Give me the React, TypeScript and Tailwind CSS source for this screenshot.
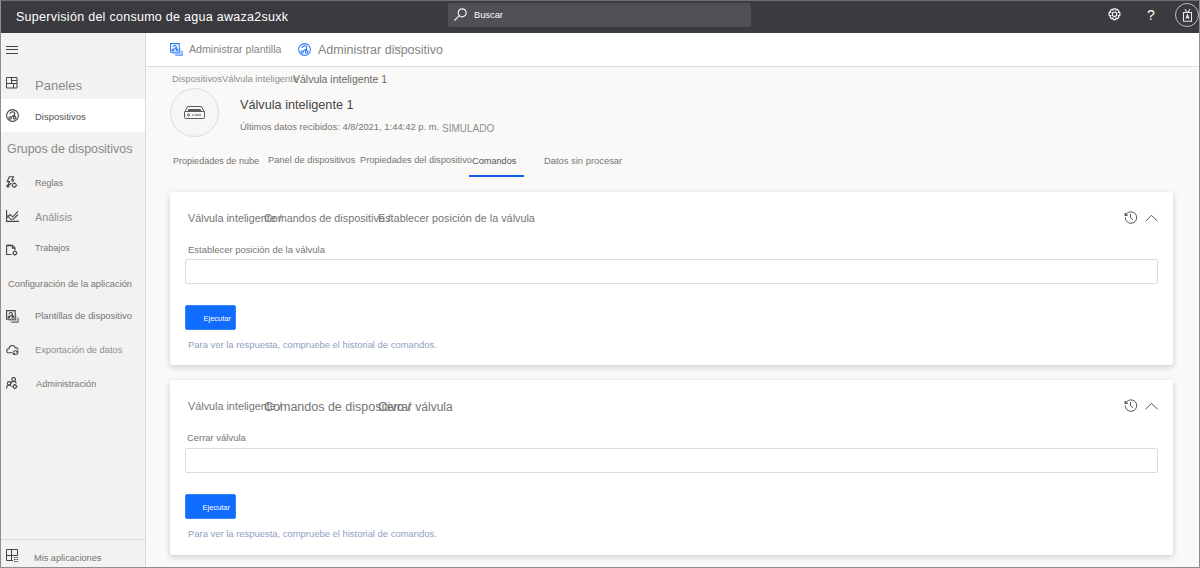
import type { ReactNode } from "react";

const stroke = { fill: "none", stroke: "currentColor", strokeWidth: 1.1 };

function MenuIcon() {
  return (
    <svg width="12" height="9" viewBox="0 0 12 9" {...stroke} strokeWidth={1}>
      <path d="M0 1.500h12M0 4.500h12M0 8.500h12" />
    </svg>
  );
}

function DashboardIcon() {
  return (
    <svg width="12" height="12" viewBox="0 0 12 12" {...stroke} strokeWidth={1}>
      <path d="M.5 .5h10.500v10.500H.5zM5.500 .5v6M7.500 6.500v4.500M.5 6.500h10.500M5.500 3.500h5.500" />
    </svg>
  );
}

function DeviceIcon({ size = 13 }: { size?: number }) {
  return (
    <svg width={size} height={size} viewBox="0 0 13 13" {...stroke}>
      <circle cx="6.500" cy="6.500" r="5.900" />
      <circle cx="4.100" cy="8.900" r="1.200" />
      <circle cx="8.600" cy="8.700" r="1.300" />
      <path d="M3.900 5c.3-1.600 1.800-2.500 3.300-2.100s2.200 2.200 .9 3.100L5 8.100M8.300 5.700l.3 1.700" />
    </svg>
  );
}

function RulesIcon() {
  return (
    <svg width="12" height="13" viewBox="0 0 12 13" {...stroke}>
      <path d="M3.300 .7h4.200L5.700 4h2L6.300 6M3.300 .7L1.200 5.600h2.300L1.300 10.800 5.300 7M1 11V8.700M1 11h2.400" />
      <circle cx="8.300" cy="9.200" r="1.900" />
      <path d="M8.300 6.300v1M8.300 11.100v1M5.600 9.200h.8M10.200 9.200h1" />
    </svg>
  );
}

function AnalyticsIcon() {
  return (
    <svg width="13" height="13" viewBox="0 0 13 13" {...stroke}>
      <path d="M.6 0v11.400H13M1 7.500l3-3 2.800 2.300L12 1.300M1.500 5.500l3.500 4 2.500-.5L12 4.500" />
    </svg>
  );
}

function JobsIcon() {
  return (
    <svg width="12" height="12" viewBox="0 0 12 12" {...stroke}>
      <path d="M5.500 10.500H.6V1.400h5.900L9 3.900v2.300M6.300 1.400v2.700H9M2.200 .5v2M4.200 .5v2" />
      <circle cx="8.900" cy="9" r="1.700" />
      <path d="M8.900 6.500v.8M8.900 10.700v.8M6.500 9h.7M10.600 9h.8" />
    </svg>
  );
}

function TemplateIcon({ tint = "#b9b8b7" }: { tint?: string }) {
  return (
    <svg width="13" height="13" viewBox="0 0 13 13" {...stroke}>
      <path d="M9.800 5v5.500H2.500M11.800 7.500v4.300H5" stroke={tint} strokeWidth={1.700} />
      <path d="M.6 .6h8.600v8.600H.6z" />
      <path d="M12.300 8v4.300H5.500" strokeWidth={0.6} />
      <path d="M3 4.200C3.200 2.500 6 1.700 6.300 3.600S4 5.700 3.200 6.800M6.500 4.500l.3 2" />
      <circle cx="2.900" cy="7.200" r=".8" />
      <circle cx="6.800" cy="7" r=".8" />
    </svg>
  );
}

function ExportIcon() {
  return (
    <svg width="13" height="12" viewBox="0 0 13 12" {...stroke}>
      <path d="M6.500 8.800H3C-.3 8.600 .2 4.600 3 4.700 3.300 .8 8.300 .6 9.200 3.600c1.700-.1 2.900 .8 2.900 2.200" />
      <path d="M7.300 8.200c.6-1.800 3.300-2 4.200-.3M11.900 6.500v1.700h-1.700M12 9.100c-.6 1.800-3.300 2-4.200 .3M7.400 10.900V9.200h1.700" />
    </svg>
  );
}

function AdminIcon() {
  return (
    <svg width="12" height="13" viewBox="0 0 12 13" {...stroke}>
      <circle cx="7.600" cy="2.500" r="1.900" />
      <circle cx="3.100" cy="6.300" r="1.700" />
      <path d="M5.200 6.300c.2-1.200 1-1.900 2.400-1.900s2.400 .7 2.700 1.900M.6 11.500c0-2.200 1-3.500 2.500-3.500s2 .8 2.300 1.700" />
      <circle cx="8.800" cy="9.600" r="1.700" />
      <path d="M8.800 7v.9M8.800 11.300v.9M6.300 9.600h.8M10.500 9.600h.9" />
    </svg>
  );
}

function AppsIcon() {
  return (
    <svg width="13" height="13" viewBox="0 0 13 13" {...stroke} strokeWidth={1}>
      <path d="M7 11.500H.5V.5h11v6M5.500 .5v11M.5 6.500h11" />
      <path d="M8 8.500h1.500M10.500 8.500H12M8 10.500h1.500M10.500 10.500H12M8 12.500h1.500M10.500 12.500H12" />
    </svg>
  );
}

function GearIcon() {
  return (
    <svg width="13" height="13" viewBox="0 0 13 13" {...stroke}>
      <path d="M5.300 .7h2.400l.3 1.500 1.300-.8 1.700 1.700-.8 1.300 1.700 .4v2.600l-1.700 .4 .8 1.300-1.700 1.700-1.300-.8-.3 1.600H5.300L5 10l-1.300 .8L2 9.100l.8-1.300-1.700-.4V4.800l1.700-.4L2 3.100l1.700-1.700 1.300 .8z" />
      <circle cx="6.500" cy="6.200" r="2.200" />
    </svg>
  );
}

function BadgeIcon() {
  return (
    <svg width="11" height="13" viewBox="0 0 11 13" {...stroke}>
      <path d="M1.500 3.500h8v8.800h-8zM3 .3l2 3M8 .3l-2 3M4 9.800l1.500-4 1.500 4M4.500 8.500h2" />
    </svg>
  );
}

function GatewayIcon() {
  return (
    <svg width="23" height="14" viewBox="0 0 23 14" fill="none" stroke="#5b5a59" strokeWidth="1">
      <path d="M1.500 6.500L4.500 .5h14l3 6M2.500 5.500h18a1 1 0 0 1 1 1v5a1 1 0 0 1-1 1h-18a1 1 0 0 1-1-1v-5a1 1 0 0 1 1-1z" />
      <path d="M5.500 3h12l1 2.500h-14z" fill="#5b5a59" stroke="none" />
      <circle cx="5.500" cy="9" r="1" />
      <path d="M9 9h1.500M11.500 9H18" />
    </svg>
  );
}

function HistoryIcon() {
  return (
    <svg width="14" height="13" viewBox="0 0 14 13" fill="none" stroke="#555453" strokeWidth="1">
      <path d="M2 3.600C4.500-.8 12.700 .3 12.700 6.500c0 3.300-2.600 5.800-5.700 5.800S1.300 9.800 1.300 6.500M6.500 3v3.700L9 8.800" />
      <path d="M1.300 2v2.300h2.300" strokeWidth="1.400" />
    </svg>
  );
}

function Row({ icon, children, className }: { icon: ReactNode; children: string; className: string }) {
  return (
    <div className="flex w-full items-center pl-[5px]">
      <span className="flex w-[29px] shrink-0 text-[#454443]">{icon}</span>
      <span className={className}>{children}</span>
    </div>
  );
}

function Card({
  heading,
  label,
  className,
  labelClass,
  buttonClass,
}: {
  heading: ReactNode;
  label: string;
  className: string;
  labelClass: string;
  buttonClass: string;
}) {
  return (
    <section
      className={`${className} flex w-[1003px] shrink-0 flex-col rounded-[3px] bg-white px-[15px] shadow-[0_2px_6px_rgba(0,0,0,0.18)]`}
    >
      <div className="flex h-[51px] shrink-0 items-center pl-[3px] text-[10.820px] text-[#767574]">
        <div className="flex items-center pt-0.5">{heading}</div>
        <div className="ml-auto flex items-center gap-[7px]">
          <HistoryIcon />
          <svg width="13" height="8" viewBox="0 0 13 8" fill="none" stroke="#555453" strokeWidth="1">
            <path d="M.5 7.300l6-6 6 6" />
          </svg>
        </div>
      </div>
      <div className={`flex shrink-0 items-start pt-px pl-[3px] text-[9.450px] leading-3 text-[#767574] ${labelClass}`}>{label}</div>
      <input className="h-[25px] w-[973px] shrink-0 rounded-[2px] border border-[#dddcdb] bg-white" />
      <button
        className={`mt-[21px] flex h-[25px] w-[51px] shrink-0 items-center justify-end rounded-[2px] border border-[#3583ff] bg-[#0f6cff] pt-0.5 text-[7.500px] text-white ${buttonClass}`}
      >
        Ejecutar
      </button>
      <p className="mt-2 pl-[3px] text-[9.430px] leading-[14px] text-[#8fa0c2]">
        Para ver la respuesta, compruebe el historial de comandos.
      </p>
    </section>
  );
}

export default function App() {
  return (
    <div className="flex h-[568px] w-[1200px] flex-col overflow-hidden border border-[#8e8e8e] border-t-[#6f6f6f] bg-[#faf9f8] font-['Liberation_Sans',Arial,sans-serif] whitespace-nowrap">
      <header className="flex h-8 shrink-0 items-center bg-[#3b3a3f] text-white">
        <h1 className="w-[447px] pl-[15px] text-[12.500px] tracking-[0.28px]">Supervisión del consumo de agua awaza2suxk</h1>
        <div className="mb-1 flex h-6 w-[303px] items-center rounded-[2px] bg-[#504f54] pl-[6px]">
          <svg className="mb-0.5" width="13" height="13" viewBox="0 0 13 13" fill="none" stroke="#f0f0f5" strokeWidth="1.200">
            <circle cx="8.200" cy="4.800" r="4" />
            <path d="M5.300 7.700L.5 12.500" />
          </svg>
          <span className="pt-px pl-[7px] text-[9.300px]">Buscar</span>
        </div>
        <div className="mb-1 ml-auto flex items-center">
          <span className="pb-px"><GearIcon /></span>
          <span className="w-[54px] pb-px pl-[26px] text-[14px] leading-none">?</span>
          <span className="flex size-6 items-center justify-center rounded-full border border-[#bdbdc0] text-[#e8e8e8]">
            <BadgeIcon />
          </span>
        </div>
      </header>

      <div className="flex min-h-0 flex-1">
        <nav className="flex w-[145px] shrink-0 flex-col border-r border-[#dddcdb] bg-[#f3f2f1] text-[#767574]">
          <div className="flex h-[33px] items-center pl-[5px] text-[#454443]">
            <MenuIcon />
          </div>
          <div className="flex h-[33px]">
            <Row icon={<DashboardIcon />} className="pt-[7px] text-[13px] text-[#8a8988]">Paneles</Row>
          </div>
          <div className="flex h-[33px] bg-white">
            <Row icon={<DeviceIcon />} className="pt-[3px] text-[9.500px] text-[#555453]">Dispositivos</Row>
          </div>
          <div className="flex h-[33px] items-center pt-0.5 pl-[6px] text-[12.400px] text-[#8a8988]">Grupos de dispositivos</div>
          <div className="flex h-[34px]">
            <Row icon={<RulesIcon />} className="pt-[3px] text-[9px]">Reglas</Row>
          </div>
          <div className="flex h-[34px]">
            <Row icon={<AnalyticsIcon />} className="pt-0.5 text-[10.800px] text-[#8f8e8d]">Análisis</Row>
          </div>
          <div className="flex h-[33px]">
            <Row icon={<JobsIcon />} className="pb-0.5 text-[9px]">Trabajos</Row>
          </div>
          <div className="flex h-[33px] items-center pt-[4px] pl-[7px] text-[9.300px]">Configuración de la aplicación</div>
          <div className="flex h-[34px]">
            <Row icon={<TemplateIcon />} className="text-[9.400px]">Plantillas de dispositivo</Row>
          </div>
          <div className="flex h-[33px]">
            <Row icon={<ExportIcon />} className="pt-[2px] text-[9.300px] text-[#8f8e8d]">Exportación de datos</Row>
          </div>
          <div className="flex h-[34px]">
            <Row icon={<AdminIcon />} className="pt-[3px] pl-px text-[9.200px]">Administración</Row>
          </div>
          <div className="mt-auto flex h-7 border-t border-[#dddcdb] pt-1">
            <Row icon={<AppsIcon />} className="-ml-[1px] pt-[6px] text-[9.200px]">Mis aplicaciones</Row>
          </div>
        </nav>

        <main className="flex min-w-0 flex-1 flex-col">
          <div className="flex h-[34px] shrink-0 items-center border-b border-[#dddcdb] bg-white pl-6 text-[#858483]">
            <span className="text-[#2f7cf6]"><TemplateIcon tint="#a8c9fb" /></span>
            <span className="w-[115px] pt-px pl-[6px] text-[10.600px]">Administrar plantilla</span>
            <span className="text-[#2f7cf6]"><DeviceIcon /></span>
            <span className="relative pt-px pl-[7px] text-[12.500px]">
              Administrar dispositivo
              <svg className="absolute top-[5px] left-[82px]" width="9" height="5" viewBox="0 0 9 5" fill="none" stroke="#8fb0c8" strokeWidth="1">
                <path d="M.5 .5l4 3.500 4-3.500" />
              </svg>
            </span>
          </div>

          <div className="flex h-[21px] shrink-0 items-center pt-[3px] pl-[26px] text-[9.400px] text-[#8f8e8d]">
            <span className="w-[50px]">Dispositivos</span>
            <span className="w-[71px]">Válvula inteligente</span>
            <span className="pt-px text-[10.500px] text-[#6a6968]">Válvula inteligente 1</span>
          </div>

          <div className="flex h-[49px] shrink-0 pl-6">
            <div className="flex size-[49px] items-center justify-center rounded-full border border-[#dddcdb] bg-[#f6f6f6]">
              <GatewayIcon />
            </div>
            <div className="flex flex-col pl-[21px]">
              <h2 className="pt-[7px] text-[12.700px] leading-5 text-[#454443]">Válvula inteligente 1</h2>
              <div className="flex h-5 items-center pt-[5px] text-[9.420px] text-[#767574]">
                <span className="w-[202px]">Últimos datos recibidos: 4/8/2021, 1:44:42 p. m.</span>
                <span className="pt-px text-[10px] text-[#8f8e8d]">SIMULADO</span>
              </div>
            </div>
          </div>

          <div className="flex h-10 shrink-0 pl-[27px] text-[9.200px] text-[#767574]">
            <span className="w-[95px] pt-[18px] text-[9.050px]">Propiedades de nube</span>
            <span className="w-[92px] pt-[17px] text-[9.300px]">Panel de dispositivos</span>
            <span className="w-[109px] pt-[17px]">Propiedades del dispositivo</span>
            <span className="w-[55px] border-b-2 border-[#1160e8] pt-[18px] pl-[3px] text-[#555453]">Comandos</span>
            <span className="pt-[17px] pl-5 text-[9.400px]">Datos sin procesar</span>
          </div>

          <div className="flex flex-col gap-[15px] pt-[15px] pl-6">
            <Card
              className="h-[173px]"
              label="Establecer posición de la válvula"
              labelClass="h-4"
              buttonClass="pr-1"
              heading={
                <>
                  <span className="w-[76px]">Válvula inteligente /</span>
                  <span className="w-[114px]">Comandos de dispositivo /</span>
                  <span>Establecer posición de la válvula</span>
                </>
              }
            />
            <Card
              className="h-[175px]"
              label="Cerrar válvula"
              labelClass="-ml-px h-[17px]"
              buttonClass="pr-[5px]"
              heading={
                <>
                  <span className="w-[76px]">Válvula inteligente /</span>
                  <span className="w-[114px] pt-px text-[12.500px]">Comandos de dispositivo /</span>
                  <span className="pt-px text-[12px]">Cerrar válvula</span>
                </>
              }
            />
          </div>
        </main>
      </div>
    </div>
  );
}
